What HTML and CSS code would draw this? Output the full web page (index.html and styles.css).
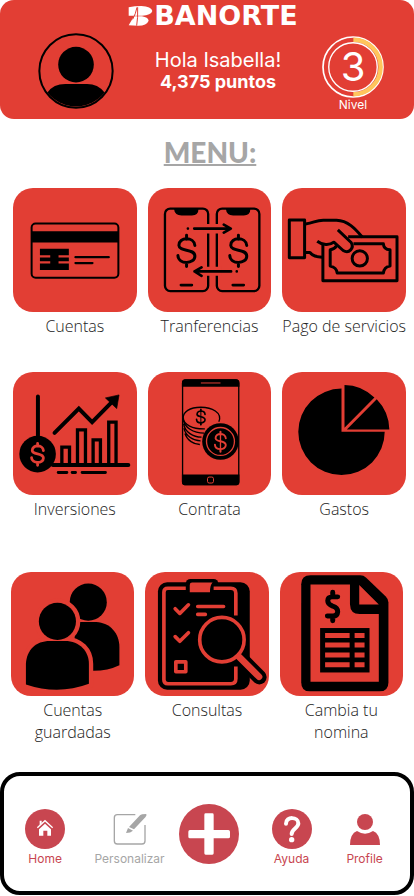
FILE: index.html
```html
<!DOCTYPE html>
<html lang="es">
<head>
    <meta charset="UTF-8">
    <meta name="viewport" content="width=device-width, initial-scale=1.0">
    <title>Banorte</title>
    <link rel="stylesheet" href="styles.css">
</head>
<body>
    <svg class="symbols" aria-hidden="true">
        <symbol id="dollar" viewBox="-50 -50 100 100" overflow="visible">
            <path d="M25,-15C23,-42 -24,-42 -23,-15C-22,5 25,-7 25,17C25,42 -25,43 -26,15M0,-46V-34M0,36V48" fill="none" stroke="currentColor" stroke-linecap="round"/>
        </symbol>
    </svg>

    <header class="header">
        <div class="brand">
            <svg class="brand-mark" viewBox="0 0 75 60" aria-hidden="true">
                <path d="M2,4Q20,0 40,0Q70,1 73,15Q69,28 42,29H2Z" fill="#fff"/>
                <path d="M18,31H42Q60,34 62,44Q56,59 31,59Q14,59 2,58Z" fill="#fff"/>
                <path d="M27,4Q23,24 14,40M29,4Q30,36 26,59" fill="none" stroke="#e23e34" stroke-width="3"/>
            </svg>
            <span class="brand-name">BANORTE</span>
        </div>
        <div class="user">
            <svg class="avatar" viewBox="114 96 226 226" role="img" aria-label="Isabella">
                <circle cx="227" cy="209" r="109" fill="none" stroke="#000" stroke-width="6"/>
                <circle cx="227" cy="190" r="53"/>
                <path d="M142,273Q160,248 195,248H260Q292,248 312,273A108,108 0 0 1 142,273Z"/>
            </svg>
            <div class="greeting">
                <p>Hola Isabella!</p>
                <p class="points">4,375 puntos</p>
            </div>
            <div class="level">
                <div class="level-badge">
                    <svg class="level-ring" viewBox="348 110 184 184" aria-hidden="true">
                        <circle cx="440" cy="202" r="89" fill="none" stroke="#fff" stroke-width="5"/>
                        <path d="M441,121A81,81 0 0 1 441,283" fill="none" stroke="#ffc55c" stroke-width="13"/>
                        <circle cx="440" cy="202" r="72" fill="none" stroke="#fff" stroke-width="4"/>
                    </svg>
                    <span class="level-number">3</span>
                </div>
                <span class="level-label">Nivel</span>
            </div>
        </div>
    </header>

    <main>
        <h1>MENU:</h1>

        <div class="menu">
            <a class="menu-item" href="#cuentas">
                <svg class="tile" viewBox="40 190 372 372" aria-hidden="true">
                    <rect x="96" y="297" width="261" height="163" rx="12" fill="none" stroke="#000" stroke-width="6"/>
                    <path d="M96,320H357V354H96ZM121,373H208V392H177V399H208V410H177V417H208V437H121V417H152V410H121V399H152V392H121Z"/>
                    <path d="M228,398H328M228,416H279" stroke="#000" stroke-width="7" stroke-linecap="round"/>
                </svg>
                <span class="label">Cuentas</span>
            </a>
            <a class="menu-item" href="#transferencias">
                <svg class="tile" viewBox="444 190 372 372" aria-hidden="true">
                    <g fill="none" stroke="#000" stroke-width="7">
                        <rect x="495" y="252" width="130" height="248" rx="16"/>
                        <rect x="651" y="252" width="128" height="248" rx="16"/>
                    </g>
                    <path d="M522,252H596Q596,273 576,273H545Q524,273 522,252ZM678,252H752Q752,273 732,273H700Q680,273 678,252Z"/>
                    <path d="M610,298H666V327H610ZM610,427H666V454H610Z" fill="#e23e34"/>
                    <g fill="none" stroke="#000" stroke-width="8" stroke-linecap="round" stroke-linejoin="round">
                        <path d="M583,312H692M672,300L693,312L672,324M584,441H694M605,429L584,441L605,454"/>
                        <path d="M543,482H576M699,482H732M564,312H564M711,441H711"/>
                    </g>
                    <use href="#dollar" x="510" y="328" width="100" height="100" stroke-width="9"/>
                    <use href="#dollar" x="666" y="328" width="100" height="100" stroke-width="9"/>
                </svg>
                <span class="label">Tranferencias</span>
            </a>
            <a class="menu-item" href="#pago">
                <svg class="tile" viewBox="226 190 372 372" aria-hidden="true">
                    <g fill="none" stroke="#000" stroke-width="9" stroke-linejoin="round">
                        <rect x="248" y="286" width="46" height="114"/>
                        <path d="M297,298C322,296 326,287 350,287H390C424,288 446,312 468,338M297,384H310C318,395 328,398 347,398"/>
                        <path d="M425,337H572V469H349V360"/>
                        <path d="M394,316L434,354C444,370 428,389 410,378L382,353C368,364 348,362 332,350"/>
                        <path d="M441,358H531Q532,375 551,376V425Q533,427 531,446H392Q390,428 371,425V376Q384,375 390,364"/>
                        <circle cx="460" cy="402" r="23"/>
                    </g>
                </svg>
                <span class="label">Pago de servicios</span>
            </a>

            <a class="menu-item" href="#inversiones">
                <svg class="tile" viewBox="40 37 372 372" aria-hidden="true">
                    <circle cx="114" cy="284" r="55"/>
                    <g fill="none" stroke="#000" stroke-width="12" stroke-linecap="round">
                        <path d="M115,111V235M165,220L238,147L278,188L338,127M160,317H387"/>
                        <path d="M187,317V263H210V317M234,317V211H258V317M281,317V241H303V317M328,317V188H350V317" stroke-width="10"/>
                        <path d="M176,339H202M218,339H228M248,339H318" stroke-width="9"/>
                    </g>
                    <path d="M359,106L318,115L352,147Z" stroke="#000" stroke-width="2" stroke-linejoin="round"/>
                    <use class="cut" href="#dollar" x="79" y="249" width="70" height="70" stroke-width="12"/>
                </svg>
                <span class="label">Inversiones</span>
            </a>
            <a class="menu-item" href="#contrata">
                <svg class="tile" viewBox="444 37 372 372" aria-hidden="true">
                    <rect x="548" y="61" width="169" height="315" rx="10" fill="none" stroke="#000" stroke-width="4"/>
                    <path d="M556,59H709Q719,59 719,70V81H546V70Q546,59 556,59ZM546,345H719V368Q719,378 709,378H556Q546,378 546,368Z"/>
                    <path d="M603,70H662" stroke="#e23e34" stroke-width="3"/>
                    <rect x="623" y="353" width="18" height="18" rx="5" fill="none" stroke="#e23e34" stroke-width="3"/>
                    <g fill="none" stroke="#000" stroke-width="4">
                        <path d="M657,187C669,158 635,143 603,143C568,143 550,158 550,174C550,196 579,209 615,208"/>
                        <path d="M550,178C552,204 581,221 613,221M551,192C555,218 580,233 605,233M552,206C557,230 581,244 602,244M555,222C562,243 582,255 600,255"/>
                    </g>
                    <use href="#dollar" x="578" y="147" width="50" height="50" stroke-width="10"/>
                    <path d="M603,150V196" stroke="#000" stroke-width="3"/>
                    <circle cx="662" cy="246" r="55"/>
                    <circle cx="662" cy="246" r="42" fill="none" stroke="#e23e34" stroke-width="4"/>
                    <use class="cut" href="#dollar" x="630" y="214" width="64" height="64" stroke-width="9"/>
                    <path d="M662,215V278" stroke="#e23e34" stroke-width="4"/>
                </svg>
                <span class="label">Contrata</span>
            </a>
            <a class="menu-item" href="#gastos">
                <svg class="tile" viewBox="226 37 372 372" aria-hidden="true">
                    <path d="M405,217V87A130,130 0 1 0 535,217Z"/>
                    <path d="M414,205V76Q465,76 504,114ZM421,210L511,119Q548,157 549,210Z"/>
                </svg>
                <span class="label">Gastos</span>
            </a>
        </div>

        <div class="menu menu-more">
            <a class="menu-item" href="#guardadas">
                <svg class="tile" viewBox="33 23 372 372" aria-hidden="true">
                    <circle cx="266" cy="114" r="56"/>
                    <path d="M225,174H290C332,176 360,208 360,250V304Q325,321 282,321H225Z"/>
                    <g fill="#e23e34" stroke="#e23e34" stroke-width="26">
                        <circle cx="173" cy="172" r="56"/>
                        <path d="M78,362V300C80,258 108,231 150,231H196C240,231 268,262 268,300V360Q175,395 78,362Z"/>
                    </g>
                    <circle cx="173" cy="172" r="56"/>
                    <path d="M78,362V300C80,258 108,231 150,231H196C240,231 268,262 268,300V360Q175,395 78,362Z"/>
                </svg>
                <span class="label">Cuentas guardadas</span>
            </a>
            <a class="menu-item" href="#consultas">
                <svg class="tile" viewBox="435 23 372 372" aria-hidden="true">
                    <rect x="474" y="54" width="277" height="324" rx="28"/>
                    <rect x="558" y="44" width="98" height="50" rx="14"/>
                    <g fill="none" stroke="#e23e34" stroke-width="11" stroke-linecap="round" stroke-linejoin="round">
                        <path d="M558,72H504Q492,72 492,84V348Q492,360 504,360H694Q709,360 709,345V308M642,72H694Q709,72 709,87V154" stroke-linecap="butt"/>
                        <path d="M526,134L540,148L566,122M526,218L540,232L566,206M594,127H672M594,151H617"/>
                        <rect x="528" y="294" width="30" height="30"/>
                    </g>
                    <path d="M570,84V62Q570,55 577,55H639Q631,62 631,84Z" fill="#e23e34"/>
                    <circle cx="667" cy="227" r="78"/>
                    <g stroke-linecap="round">
                        <path d="M724,284L780,340" stroke="#000" stroke-width="44"/>
                        <path d="M715,275L779,339" stroke="#e23e34" stroke-width="20"/>
                    </g>
                    <circle cx="667" cy="227" r="67" stroke="#e23e34" stroke-width="11"/>
                </svg>
                <span class="label">Consultas</span>
            </a>
            <a class="menu-item" href="#nomina">
                <svg class="tile" viewBox="218 23 372 372" aria-hidden="true">
                    <path d="M310,33H460Q470,33 478,40L537,97Q545,105 545,115V356Q545,383 518,383H308Q282,383 282,356V60Q282,33 310,33Z"/>
                    <path d="M310,61H429V120Q430,150 458,150H516V354H310ZM457,62L516,121H457Z" fill="#e23e34"/>
                    <path d="M392,98H376Q362,98 362,110Q362,121 377,126Q392,130 392,143Q391,156 378,156H361M377,84V98M377,156V170" fill="none" stroke="#000" stroke-width="15" stroke-linecap="round"/>
                    <rect x="339" y="192" width="149" height="134"/>
                    <path d="M354,207H428V222H354ZM443,207H473V222H443ZM354,236H428V251H354ZM443,236H473V251H443ZM354,266H428V281H354ZM443,266H473V281H443ZM354,295H428V310H354ZM443,295H473V310H443Z" fill="#e23e34"/>
                </svg>
                <span class="label">Cambia tu nomina</span>
            </a>
        </div>
    </main>

    <nav class="nav">
        <a class="nav-item" href="#home">
            <svg class="nav-icon" viewBox="0 0 120 120" aria-hidden="true">
                <circle cx="60" cy="60" r="60" fill="#c84650"/>
                <path d="M42,61L60,44L78,61V80H67V65H55V80H42ZM44,35H50V42L44,48Z" fill="#fff"/>
                <path d="M37,56L60,35L83,56" fill="none" stroke="#fff" stroke-width="4"/>
            </svg>
            <span>Home</span>
        </a>
        <a class="nav-item disabled" href="#personalizar">
            <svg class="nav-icon" viewBox="0 0 120 120" aria-hidden="true">
                <path d="M76,17H22Q13,17 13,26V96Q13,105 22,105H96Q105,105 105,96V48" fill="none" stroke="#a6a6a6" stroke-width="4"/>
                <path d="M57,54L90,19Q94,15 108,15Q112,17 106,25L72,61ZM54,57L69,65Q62,72 48,72Z" fill="#a6a6a6"/>
            </svg>
            <span>Personalizar</span>
        </a>
        <button class="nav-add" type="button" aria-label="Agregar">
            <svg viewBox="0 0 180 180" aria-hidden="true">
                <circle cx="90" cy="90" r="90" fill="#c84650"/>
                <path d="M80,28H100Q104,28 104,32V78H148Q153,78 153,83V98Q153,103 148,103H104V148Q104,152 100,152H80Q76,152 76,148V103H33Q28,103 28,98V83Q28,78 33,78H76V32Q76,28 80,28Z" fill="#fff"/>
            </svg>
        </button>
        <a class="nav-item" href="#ayuda">
            <svg class="nav-icon" viewBox="0 0 120 120" aria-hidden="true">
                <circle cx="60" cy="60" r="60" fill="#c84650"/>
                <path d="M42,44C42,21 79,23 79,43C79,58 59,59 59,75" fill="none" stroke="#fff" stroke-width="12" stroke-linecap="round"/>
                <circle cx="59" cy="92" r="8" fill="#fff"/>
            </svg>
            <span>Ayuda</span>
        </a>
        <a class="nav-item" href="#profile">
            <svg class="nav-icon" viewBox="0 0 120 120" aria-hidden="true">
                <circle cx="60" cy="39" r="24" fill="#c84650"/>
                <path d="M36,66Q60,82 84,66Q105,74 105,108H15Q15,74 36,66Z" fill="#c84650"/>
            </svg>
            <span>Profile</span>
        </a>
    </nav>
</body>
</html>
```
FILE: styles.css
```css
* {
    box-sizing: border-box;
}

body {
    margin: 0;
    background-color: white;
    font-family: "Open Sans", "Noto Sans", sans-serif;
}

a {
    color: inherit;
    text-decoration: none;
}

svg {
    display: block;
}

.symbols {
    display: none;
}

/* header */
.header {
    background-color: #e23e34;
    color: white;
    border-radius: 14px;
    padding-bottom: 8px;
    font-family: Inter, sans-serif;
}

.brand {
    display: flex;
    justify-content: center;
    align-items: center;
    gap: 1px;
    height: 30px;
    padding: 2px 0 0 12px;
}

.brand-mark {
    width: 25px;
    height: 20px;
}

.brand-name {
    font-family: "DejaVu Sans", sans-serif;
    font-size: 27px;
    font-weight: bold;
    line-height: 28px;
}

.user {
    display: flex;
    justify-content: space-between;
    align-items: center;
    padding: 0 30px 0 38px;
}

.avatar {
    width: 76px;
    height: 76px;
}

.greeting {
    text-align: center;
    font-size: 20px;
    line-height: 22px;
}

.greeting p {
    margin: 0;
}

.greeting .points {
    font-weight: bold;
    font-size: 18px;
}

.level {
    text-align: center;
}

.level-badge {
    display: grid;
    place-items: center;
    padding-top: 6px;
}

.level-ring,
.level-number {
    grid-area: 1 / 1;
}

.level-ring {
    width: 62px;
    height: 62px;
}

.level-number {
    font-size: 40px;
    line-height: 62px;
}

.level-label {
    display: block;
    font-size: 12px;
    line-height: 13px;
}

/* menu */
h1 {
    margin: 0;
    padding: 13px 0 16px 6px;
    text-align: center;
    font-family: Lato, sans-serif;
    font-size: 28px;
    font-weight: 900;
    line-height: 40px;
    color: #a6a6a6;
    text-decoration: underline;
    text-decoration-thickness: 2px;
}

.menu {
    display: grid;
    grid-template-columns: repeat(3, 1fr);
    gap: 35px 11px;
    padding: 0 8px 0 13px;
}

.menu-more {
    padding: 0 11px;
    margin-top: 52px;
}

.menu-item {
    display: flex;
    flex-direction: column;
    align-items: center;
    color: #222;
}

.tile {
    width: 100%;
    background-color: #e23e34;
    border-radius: 20px;
    color: black;
}

.cut {
    color: #e23e34;
}

.label {
    margin: 3px -6px 0;
    font-size: 16px;
    font-weight: 300;
    line-height: 22px;
    text-align: center;
}

.menu-more .label {
    max-width: 100px;
}

/* bottom navigation */
.nav {
    display: grid;
    grid-template-columns: 18fr 19fr 16fr 20fr 12fr;
    align-items: center;
    justify-items: center;
    margin-top: 29px;
    padding: 25px 18px 24px 0;
    border: 4px solid black;
    border-radius: 20px;
    color: #c84650;
    font-family: Inter, sans-serif;
    font-size: 12px;
    line-height: 16px;
}

.nav-item {
    display: flex;
    flex-direction: column;
    align-items: center;
    gap: 2px;
    padding-top: 8px;
}

.nav-item.disabled {
    color: #a6a6a6;
}

.nav-icon {
    width: 40px;
    height: 40px;
}

.nav-add {
    width: 60px;
    height: 60px;
    padding: 0;
    border: none;
    border-radius: 50%;
    background: none;
    cursor: pointer;
}
```
